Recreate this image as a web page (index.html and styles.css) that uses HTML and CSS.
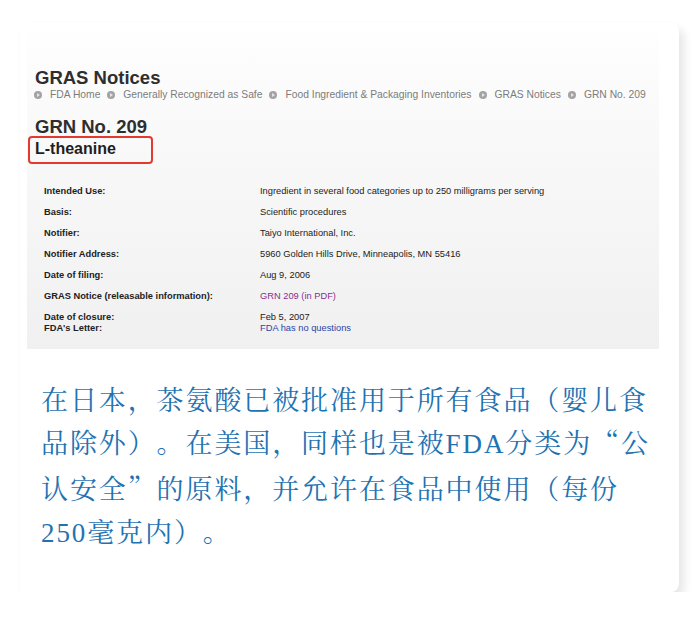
FILE: index.html
```html
<!DOCTYPE html>
<html lang="zh-CN">
<head>
  <meta charset="UTF-8">
  <meta name="viewport" content="width=device-width, initial-scale=1.0">
  <title>GRAS Notices - L-theanine</title>
  <link rel="stylesheet" href="styles.css">
</head>
<body>

  <div class="card">
    <!-- screenshot of the FDA page -->
    <div class="shot">
      <h1>GRAS Notices</h1>
      <ul class="crumbs">
        <li><span class="dot"></span>FDA Home</li>
        <li><span class="dot"></span>Generally Recognized as Safe</li>
        <li><span class="dot"></span>Food Ingredient &amp; Packaging Inventories</li>
        <li><span class="dot"></span>GRAS Notices</li>
        <li><span class="dot"></span>GRN No. 209</li>
      </ul>
      <h2>GRN No. 209</h2>
      <h3 class="mark">L-theanine</h3>

      <div class="facts">
        <div class="row"><b>Intended Use:</b><span>Ingredient in several food categories up to 250 milligrams per serving</span></div>
        <div class="row"><b>Basis:</b><span>Scientific procedures</span></div>
        <div class="row"><b>Notifier:</b><span>Taiyo International, Inc.</span></div>
        <div class="row"><b>Notifier Address:</b><span>5960 Golden Hills Drive, Minneapolis, MN 55416</span></div>
        <div class="row"><b>Date of filing:</b><span>Aug 9, 2006</span></div>
        <div class="row"><b>GRAS Notice (releasable information):</b><span><a class="visited" href="#">GRN 209 (in PDF)</a></span></div>
        <div class="row"><b>Date of closure:<br>FDA's Letter:</b><span>Feb 5, 2007<br><a href="#">FDA has no questions</a></span></div>
      </div>
    </div>

    <p class="caption">在日本，茶氨酸已被批准用于所有食品（婴儿食<br>品除外）。在美国，同样也是被<span class="latin">FDA</span>分类为“公<br>认安全”的原料，并允许在食品中使用（每份<br><span class="latin">250</span>毫克内）。</p>
  </div>

</body>
</html>
```

FILE: styles.css
```css
body {
  margin: 0;
  background: #fff;
  font-family: "Liberation Sans", Arial, sans-serif;
}

.card {
  margin: 23px 0 0 20px;
  width: 659px;
  height: 569px;
  background: #fff;
  border-radius: 0 8px 8px 0;
  box-shadow: 5px 6px 10px rgba(0, 0, 0, 0.10);
}

.shot {
  margin-left: 7px;
  width: 632px;
  height: 326px;
  padding-top: 45px;
  box-sizing: border-box;
  background: linear-gradient(to bottom, #fff 0%, #fbfbfb 20%, #f5f5f5 65%, #f0f0f0 100%);
}

h1 {
  margin: 0 0 0 8px;
  font-size: 18.5px;
  line-height: 20px;
  color: #2e2e2e;
}

.crumbs {
  list-style: none;
  margin: 1px 0 0;
  padding: 0 0 0 7px;
  display: flex;
  gap: 7px;
  font-size: 10.3px;
  line-height: 12px;
  color: #7c7c7c;
  white-space: nowrap;
}

.crumbs li {
  flex: none;
  display: flex;
  align-items: center;
  gap: 8px;
}

.dot {
  width: 8px;
  height: 8px;
  border-radius: 50%;
  background: #a3a3a3;
  position: relative;
}

.dot::after {
  content: "";
  position: absolute;
  left: 3px;
  top: 2px;
  border-left: 3px solid #e4e4e4;
  border-top: 2px solid transparent;
  border-bottom: 2px solid transparent;
}

h2 {
  margin: 16px 0 0 8px;
  font-size: 18.5px;
  line-height: 20px;
  color: #2e2e2e;
}

.mark {
  display: inline-block;
  margin: -1px 0 0 1px;
  padding: 2px 35px 4px 5px;
  border: 2px solid #e23a2e;
  border-radius: 4px;
  font-size: 16px;
  line-height: 18px;
  color: #1e1e1e;
}

.facts {
  margin: 22px 0 0 17px;
  font-size: 9.3px;
  line-height: 11px;
  color: #222;
}

.row {
  display: flex;
  margin-bottom: 10px;
}

.row b {
  width: 216px;
  flex: none;
}

a {
  color: #2b46a8;
  text-decoration: none;
}

a.visited {
  color: #8c2b8f;
}

.caption {
  margin: 28px 0 0 21px;
  font-family: "Noto Serif CJK SC", "Noto Sans CJK SC", serif;
  font-size: 27px;
  line-height: 43px;
  letter-spacing: 1.9px;
  text-spacing-trim: space-all;
  white-space: nowrap;
  color: #1f73b2;
}

.latin {
  font-family: "Liberation Serif", serif;
}
```
